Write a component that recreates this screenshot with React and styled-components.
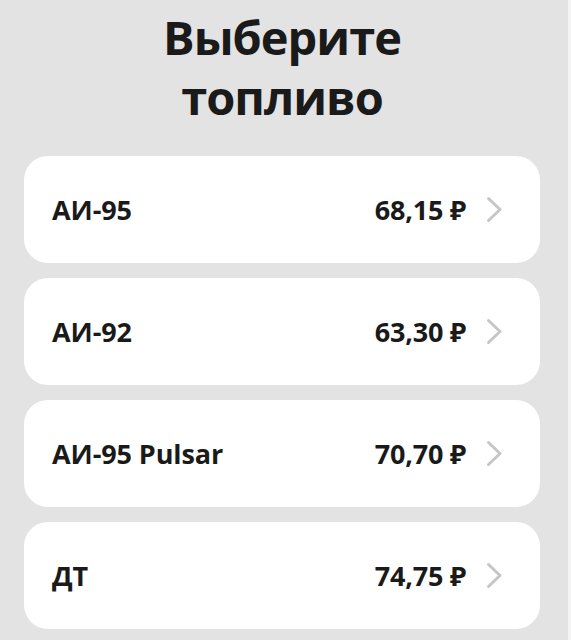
import React from 'react';
import styled, { createGlobalStyle } from 'styled-components';

const GlobalStyle = createGlobalStyle`
  html, body {
    margin: 0;
    padding: 0;
    background: #f4f4f4;
  }
  body {
    font-family: "Open Sans", "Noto Sans", sans-serif;
    color: #1a1a1a;
  }
`;

const fuels = [
  { name: 'АИ-95', price: '68,15 ₽' },
  { name: 'АИ-92', price: '63,30 ₽' },
  { name: 'АИ-95 Pulsar', price: '70,70 ₽' },
  { name: 'ДТ', price: '74,75 ₽' },
];

const Chevron = () => (
  <ChevronIcon viewBox="0 0 17 27" width="17" height="27">
    <polyline points="2.5,2.5 14,13.5 2.5,24.5" />
  </ChevronIcon>
);

export default function App() {
  return (
    <>
      <GlobalStyle />
      <Screen>
        <Title>
          Выберите
          <br />
          топливо
        </Title>
        <List>
          {fuels.map((f) => (
            <Card key={f.name}>
              <Name>{f.name}</Name>
              <Price>{f.price}</Price>
              <Chevron />
            </Card>
          ))}
        </List>
      </Screen>
    </>
  );
}

const Screen = styled.div`
  width: 568px;
  min-height: 640px;
  box-sizing: border-box;
  background: #e3e3e3;
  padding: 7px 28px 0 24px;
  display: flex;
  flex-direction: column;
  align-items: stretch;
`;

const Title = styled.h1`
  margin: 0;
  font-size: 47px;
  line-height: 60px;
  font-weight: 700;
  text-align: center;
  letter-spacing: -1px;
  color: #1a1a1a;
`;

const List = styled.div`
  margin-top: 29px;
  display: flex;
  flex-direction: column;
  gap: 15px;
`;

const Card = styled.div`
  height: 107px;
  box-sizing: border-box;
  background: #ffffff;
  border-radius: 24px;
  padding: 0 37px 0 28px;
  display: flex;
  align-items: center;
`;

const Name = styled.span`
  flex: 1;
  font-size: 27px;
  font-weight: 700;
  letter-spacing: -0.1px;
`;

const Price = styled.span`
  font-size: 27px;
  font-weight: 700;
  letter-spacing: -0.2px;
  margin-right: 20px;
`;

const ChevronIcon = styled.svg`
  flex: none;
  fill: none;
  stroke: #c6c6c6;
  stroke-width: 3;
  stroke-linecap: round;
  stroke-linejoin: round;
`;
